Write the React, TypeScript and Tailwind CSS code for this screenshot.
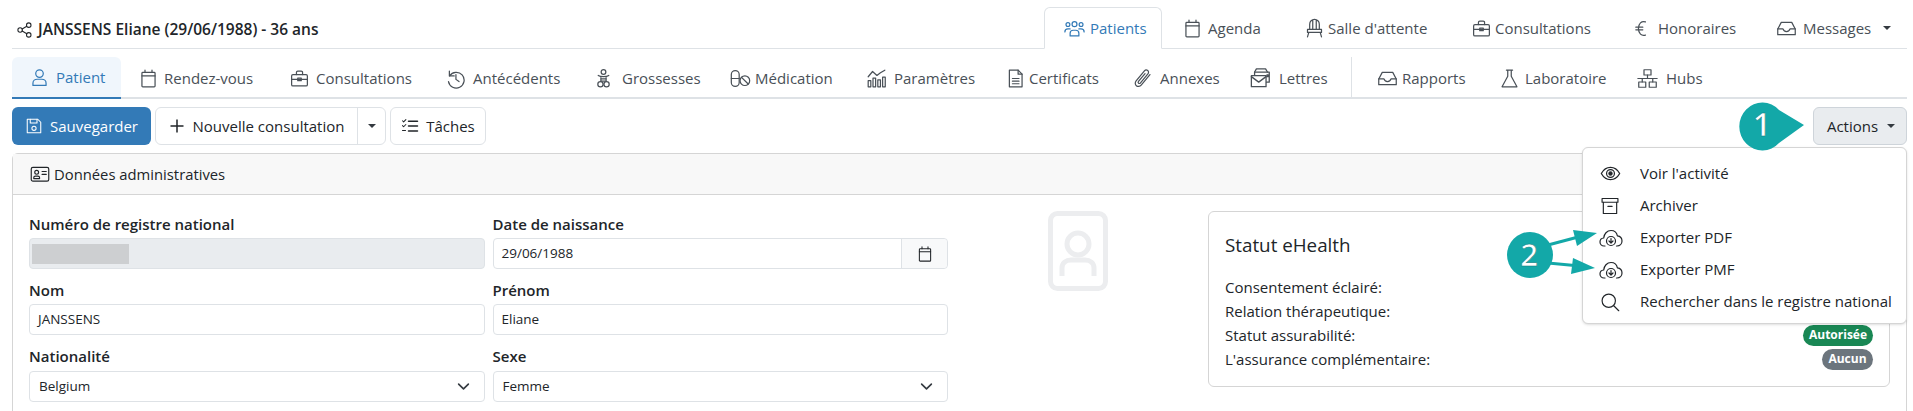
import type { ReactNode } from "react";

const Svg = ({ className = "", children }: { className?: string; children: ReactNode }) => (
	<svg
		viewBox="0 0 24 24"
		fill="none"
		stroke="currentColor"
		strokeWidth="1.4"
		strokeLinecap="round"
		strokeLinejoin="round"
		className={className}
	>
		{children}
	</svg>
);

const size = "h-[21px] w-[21px] shrink-0";

const icons: Record<string, ReactNode> = {
	share: (
		<Svg className="h-[18px] w-[18px] shrink-0">
			<circle cx="5.5" cy="12" r="3" />
			<circle cx="17" cy="5.5" r="3" />
			<circle cx="17" cy="18.5" r="3" />
			<path d="M8.2 10.6 14.4 7M8.2 13.4l6.2 3.6" />
		</Svg>
	),
	user: (
		<Svg className={size}>
			<circle cx="12" cy="7.5" r="4.3" />
			<path d="M4.5 21v-2.5c0-3 2.4-4.5 5-4.5h5c2.6 0 5 1.500 5 4.500V21z" />
		</Svg>
	),
	users: (
		<Svg className={size}>
			<circle cx="12" cy="7" r="2.800" />
			<circle cx="4.500" cy="7.500" r="2.200" />
			<circle cx="19.500" cy="7.500" r="2.200" />
			<path d="M7 20.500v-3c0-2 1.500-3.500 3.500-3.500h3c2 0 3.500 1.500 3.500 3.500v3z" />
			<path d="M1 16c0-2 1.500-3.500 3.500-3.500H7M23 16c0-2-1.500-3.500-3.500-3.500H17" />
		</Svg>
	),
	calendar: (
		<Svg className={size}>
			<rect x="4.500" y="5" width="15" height="16.500" rx="1" />
			<path d="M4.500 9h15M8 2.500V5M16 2.500V5" />
		</Svg>
	),
	briefcase: (
		<Svg className={size}>
			<rect x="3" y="7.500" width="18" height="13" rx="1.500" />
			<path d="M8.500 7.500V5a1.500 1.500 0 0 1 1.500-1.500h4A1.500 1.500 0 0 1 15.500 5v2.500M3 13h18" />
			<rect x="10" y="11.500" width="4" height="3" />
		</Svg>
	),
	history: (
		<Svg className={size}>
			<path d="M5 3.500V9h5.500" />
			<path d="M5.300 9A9 9 0 1 1 4 15.500" />
			<path d="M12.500 7.500V13l3.500 2.500" />
		</Svg>
	),
	baby: (
		<Svg className={size}>
			<circle cx="12" cy="4.500" r="2.700" />
			<path d="M6 8.500c2.500 1.800 9.500 1.800 12 0M9 10v5h6v-5M9 12.500h6" />
			<circle cx="8.500" cy="18.500" r="3" />
			<circle cx="15.500" cy="18.500" r="3" />
		</Svg>
	),
	pill: (
		<Svg className="h-[21px] w-[21px] shrink-0">
			<rect x="1.500" y="3" width="9" height="18" rx="4.500" />
			<path d="M1.500 12h9" />
			<circle cx="17" cy="14.500" r="5.500" />
			<path d="m13.200 10.700 7.600 7.600" />
		</Svg>
	),
	chart: (
		<Svg className={size}>
			<path d="M2.500 21.500v-7h3v7zM8 21.500v-10h3v10zM13.500 21.500v-8h3v8zM19 21.500v-11h3v11z" />
			<path d="m2.500 10 5-6 5 4.500 4-3 5-3" />
		</Svg>
	),
	file: (
		<Svg className={size}>
			<path d="M5 2.500h10l4.500 4.500v14.500H5z" />
			<path d="M15 2.500V7h4.500M8.500 12h7.500M8.500 15h7.500M8.500 18h7.500" />
		</Svg>
	),
	clip: (
		<Svg className={size}>
			<path d="m20.500 7.500-10 12c-1.500 1.800-4 2-5.500.7-1.600-1.300-1.700-3.700-.3-5.400l9.500-11.500c1-1.200 2.700-1.300 3.800-.4 1.100.9 1.200 2.600.2 3.800l-8.700 10.500c-.5.600-1.400.7-2 .2-.6-.5-.6-1.400-.1-2l7.500-9" />
		</Svg>
	),
	letters: (
		<Svg className="h-[22px] w-[22px] shrink-0">
			<path d="M5 9V5.500h16v11h-3" />
			<path d="M5 5.500 7 2h10l2 3.500" />
			<rect x="1.500" y="9.500" width="16" height="12" />
			<path d="m1.500 10.500 8 6 8-6" />
			<rect x="18.500" y="8.500" width="1.500" height="2" />
		</Svg>
	),
	inbox: (
		<Svg className={size}>
			<path d="M2 12.500 6 5h12l4 7.500V19H2z" />
			<path d="M2 12.500h6c.5 2 2 3 4 3s3.500-1 4-3h6" />
		</Svg>
	),
	flask: (
		<Svg className={size}>
			<path d="M8.500 2.500h7M10 2.500v7L3.500 21.500h17L14 9.500v-7" />
		</Svg>
	),
	hubs: (
		<Svg className={size}>
			<rect x="8" y="2" width="8" height="6" />
			<rect x="2" y="16" width="8" height="6" />
			<rect x="14" y="16" width="8" height="6" />
			<path d="M12 8v4M1 12h22M6 12v4M18 12v4" />
		</Svg>
	),
	chair: (
		<Svg className={size}>
			<path d="M6.500 13V7a5.500 5.500 0 0 1 11 0v6M10 13V3M14 13V3" />
			<path d="M4 13h16v3.500H4zM5.500 16.500 4 21.500M18.500 16.500l1.500 5" />
		</Svg>
	),
	euro: (
		<Svg className={size}>
			<path d="M16.500 4.500C12 3 8.500 6.500 8.500 12s3.500 9 8 7.500M5.500 10.500h8M5.500 13.500h8" />
		</Svg>
	),
	save: (
		<Svg className="h-[18px] w-[18px] shrink-0">
			<path d="M3 3h14l4 4v14H3z" />
			<path d="M7 3v5h9V3" />
			<circle cx="12" cy="15" r="2.800" />
		</Svg>
	),
	tasks: (
		<Svg className="h-[18px] w-[18px] shrink-0">
			<path d="M10 5.500h12M10 12h12M10 18.500h12" strokeWidth="2" />
			<path d="m2 5 1.500 1.500L6.500 3.500M2 11.500 3.500 13l3-3M2 18h4" />
		</Svg>
	),
	idcard: (
		<Svg className="h-[20px] w-[20px] shrink-0">
			<rect x="1.500" y="4" width="21" height="16.500" rx="2" />
			<circle cx="8" cy="10" r="2.300" />
			<path d="M4.500 17.500v-1c0-1.300 1-2 2-2h3c1 0 2 .7 2 2v1zM14.500 9h5M14.500 12.500h5" />
		</Svg>
	),
	eye: (
		<Svg className="h-[21px] w-[21px] shrink-0">
			<path d="M1.500 12C4 7.500 7.700 5 12 5s8 2.500 10.500 7c-2.500 4.500-6.200 7-10.500 7s-8-2.500-10.500-7z" />
			<circle cx="12" cy="12" r="4.500" />
			<circle cx="12" cy="12" r="1.800" fill="currentColor" />
		</Svg>
	),
	archive: (
		<Svg className="h-[20px] w-[20px] shrink-0">
			<rect x="2.500" y="3" width="19" height="4.500" />
			<path d="M4 7.500V21h16V7.500M9.500 12.500h5" />
		</Svg>
	),
	cloud: (
		<svg
			viewBox="0 0 24 24"
			fill="none"
			stroke="currentColor"
			strokeWidth="1.200"
			strokeLinecap="round"
			strokeLinejoin="round"
			className="h-[24px] w-[24px] shrink-0 -ml-px"
		>
			<path d="M6 20H5C2.800 20 1 18.200 1 16s1.600-3.800 3.700-4C5 8 8 4.500 12 4.500c3.200 0 5.800 2.300 6.400 5.300 2.600.3 4.600 2.500 4.600 5.200 0 2.800-2.200 5-5 5h-.5" />
			<circle cx="12" cy="15" r="4.500" />
			<path d="M12 12.500v4.500M10 15l2 2 2-2" />
		</svg>
	),
	search: (
		<Svg className="h-[20px] w-[20px] shrink-0">
			<circle cx="10.500" cy="10.500" r="8" />
			<path d="m16.500 16.500 6 6" />
		</Svg>
	),
};

const mainTabs = [
	{ label: "Patients", icon: "users", width: "w-[118px]", pad: "pl-[19px]", box: "w-[26px]", active: true },
	{ label: "Agenda", icon: "calendar", width: "w-[124px]", pad: "pl-[20px]", box: "w-[26px]" },
	{ label: "Salle d'attente", icon: "chair", width: "w-[167px]", pad: "pl-[18px]", box: "w-[24px]" },
	{ label: "Consultations", icon: "briefcase", width: "w-[164px]", pad: "pl-[18px]", box: "w-[24px]" },
	{ label: "Honoraires", icon: "euro", width: "w-[140px]", pad: "pl-[14px]", box: "w-[27px]" },
	{ label: "Messages", icon: "inbox", width: "w-[150px]", pad: "pl-[19px]", box: "w-[27px]", caret: true },
];

const subTabs = [
	{ label: "Patient", icon: "user", width: "w-[109px]", pad: "pl-[17px]", box: "w-[27px]", active: true },
	{ label: "Rendez-vous", icon: "calendar", width: "w-[152px]", pad: "pl-[17px]", box: "w-[26px]" },
	{ label: "Consultations", icon: "briefcase", width: "w-[157px]", pad: "pl-[16px]", box: "w-[27px]" },
	{ label: "Antécédents", icon: "history", width: "w-[150px]", pad: "pl-[15px]", box: "w-[28px]" },
	{ label: "Grossesses", icon: "baby", width: "w-[134px]", pad: "pl-[13px]", box: "w-[29px]" },
	{ label: "Médication", icon: "pill", width: "w-[136px]", pad: "pl-[16px]", box: "w-[25px]" },
	{ label: "Paramètres", icon: "chart", width: "w-[140px]", pad: "pl-[16px]", box: "w-[28px]" },
	{ label: "Certificats", icon: "file", width: "w-[126px]", pad: "pl-[15px]", box: "w-[24px]" },
	{ label: "Annexes", icon: "clip", width: "w-[117px]", pad: "pl-[16px]", box: "w-[28px]" },
	{ label: "Lettres", icon: "letters", width: "w-[118px]", pad: "pl-[17px]", box: "w-[29px]" },
];

const reportTabs = [
	{ label: "Rapports", icon: "inbox", width: "w-[131px]", pad: "pl-[25px]", box: "w-[25px]" },
	{ label: "Laboratoire", icon: "flask", width: "w-[137px]", pad: "pl-[16px]", box: "w-[26px]" },
	{ label: "Hubs", icon: "hubs", width: "w-[100px]", pad: "pl-[17px]", box: "w-[29px]" },
];

const menu = [
	{ label: "Voir l'activité", icon: "eye" },
	{ label: "Archiver", icon: "archive" },
	{ label: "Exporter PDF", icon: "cloud" },
	{ label: "Exporter PMF", icon: "cloud" },
	{ label: "Rechercher dans le registre national", icon: "search" },
];

const Caret = () => (
	<span className="inline-block h-0 w-0 border-x-[4px] border-t-[4px] border-x-transparent border-t-[#343a40]" />
);

const Chevron = () => (
	<svg viewBox="0 0 16 16" className="h-[13px] w-[13px] text-[#343a40]" fill="none" stroke="currentColor" strokeWidth="2" strokeLinecap="round" strokeLinejoin="round">
		<path d="m2 5 6 6 6-6" />
	</svg>
);

type Tab = { label: string; icon: string; width: string; pad: string; box: string; active?: boolean; caret?: boolean };

const SubTab = ({ tab }: { tab: Tab }) => (
	<div
		className={`flex h-[42px] shrink-0 items-center ${tab.width} ${tab.pad} ${
			tab.active
				? "-mb-[2px] rounded-t-md border-b-[2px] border-[#337ab7] bg-[#f0f6fc] text-[#337ab7]"
				: "text-[#495057]"
		}`}
	>
		<span className={`flex shrink-0 items-center ${tab.box}`}>{icons[tab.icon]}</span>
		<span>{tab.label}</span>
	</div>
);

const Label = ({ children }: { children: ReactNode }) => (
	<div className="h-[24px] text-[15px] leading-[22px] font-semibold text-[#212529]">{children}</div>
);

const inputClass = "flex h-[31px] items-center rounded border border-[#dee2e6] bg-white px-2 text-[13.5px] text-[#212529]";

const Field = ({ label, value }: { label: string; value: string }) => (
	<div>
		<Label>{label}</Label>
		<div className={`mt-px ${inputClass}`}>{value}</div>
	</div>
);

const SelectField = ({ label, value }: { label: string; value: string }) => (
	<div>
		<Label>{label}</Label>
		<div className={`mt-[2px] justify-between ${inputClass}`}>
			<span className="pl-px">{value}</span>
			<span className="flex pr-[6px]">
				<Chevron />
			</span>
		</div>
	</div>
);

const Callouts = () => (
	<svg className="pointer-events-none absolute top-0 left-0 z-20 h-[411px] w-[1913px]" viewBox="0 0 1913 411">
		<path d="M1779 110 1804 125 1779 143A23 24 0 1 1 1779 110Z" fill="#13a8a8" />
		<text x="1762" y="136" textAnchor="middle" fontSize="32" fontWeight="600" fill="#fff" stroke="#0c7d7d" strokeWidth="0.5" fontFamily="'Open Sans', sans-serif">
			1
		</text>
		<path d="M1548 245 1582 236" stroke="#13a8a8" strokeWidth="3" />
		<path d="M1597 233 1573 230 1577 246Z" fill="#13a8a8" />
		<path d="M1548 263 1580 266" stroke="#13a8a8" strokeWidth="3" />
		<path d="M1595 268 1573 258 1571 274Z" fill="#13a8a8" />
		<ellipse cx="1530" cy="255" rx="23" ry="23" fill="#13a8a8" />
		<text x="1529" y="266" textAnchor="middle" fontSize="31" fontWeight="600" fill="#fff" stroke="#0c7d7d" strokeWidth="0.5" fontFamily="'Open Sans', sans-serif">
			2
		</text>
	</svg>
);

export default function App() {
	return (
		<div className="relative h-[411px] w-[1913px] overflow-hidden bg-white pr-[6px] pl-3 font-['Open_Sans',sans-serif] text-[15px] text-[#212529]">
			{/* patient title + main navigation */}
			<div className="flex h-[49px] items-end justify-between border-b border-[#dee2e6]">
				<div className="flex h-[48px] items-center gap-[4px] pt-[12px] pl-1 text-[15.5px] font-semibold">
					{icons.share}
					<span>JANSSENS Eliane (29/06/1988) - 36 ans</span>
				</div>
				<div className="flex h-[42px] -mb-px">
					{mainTabs.map((tab: Tab) => (
						<div
							key={tab.label}
							className={`flex shrink-0 items-center ${tab.width} ${tab.pad} ${
								tab.active
									? "rounded-t-md border border-b-white border-[#dee2e6] text-[#337ab7]"
									: "text-[#495057]"
							}`}
						>
							<span className={`flex shrink-0 items-center ${tab.box}`}>{icons[tab.icon]}</span>
							<span>{tab.label}</span>
							{tab.caret && (
								<span className="ml-[12px] flex">
									<Caret />
								</span>
							)}
						</div>
					))}
				</div>
			</div>

			{/* patient sections */}
			<div className="mt-2 flex h-[42px] border-b-[2px] border-[#dee2e6]">
				{subTabs.map((tab) => (
					<SubTab key={tab.label} tab={tab} />
				))}
				<div className="h-full w-px shrink-0 bg-[#dee2e6]" />
				{reportTabs.map((tab) => (
					<SubTab key={tab.label} tab={tab} />
				))}
			</div>

			{/* toolbar */}
			<div className="mt-2 flex h-[38px] items-stretch justify-between">
				<div className="flex gap-1">
					<button className="flex w-[139px] items-center justify-center gap-[7px] rounded-md bg-[#337ab7] text-white">
						{icons.save}
						Sauvegarder
					</button>
					<div className="flex w-[231px] rounded-md border border-[#dee2e6] text-[#212529]">
						<div className="flex flex-1 items-center justify-center gap-[8px] border-r border-[#dee2e6]">
							<svg viewBox="0 0 16 16" className="h-[16px] w-[16px]" fill="none" stroke="currentColor" strokeWidth="1.500">
								<path d="M8 1.500v13M1.500 8h13" />
							</svg>
							Nouvelle consultation
						</div>
						<div className="flex w-[27px] items-center justify-center">
							<Caret />
						</div>
					</div>
					<button className="flex w-[96px] items-center justify-center gap-[7px] rounded-md border border-[#dee2e6]">
						{icons.tasks}
						Tâches
					</button>
				</div>
				<div className="relative">
					<button className="flex h-full w-[94px] items-center justify-center gap-[9px] rounded-md border border-[#ced4da] bg-[#e9ecef] pl-[2px]">
						Actions
						<Caret />
					</button>
					<div className="absolute top-[40px] right-0 z-10 flex h-[177px] w-[325px] flex-col justify-center rounded-md border border-[#d5d5d5] bg-white pt-[4px] shadow-sm">
						{menu.map((item) => (
							<div key={item.label} className="flex h-[32px] items-center pl-[17px] text-[15px] text-[#212529]">
								<span className="flex w-[40px] shrink-0 items-center">{icons[item.icon]}</span>
								<span className="whitespace-nowrap">{item.label}</span>
							</div>
						))}
					</div>
				</div>
			</div>

			{/* administrative data */}
			<div className="mt-2 h-[300px] rounded-t-md border border-[#d5d5d5]">
				<div className="flex h-[41px] items-center gap-[4px] border-b border-[#d5d5d5] bg-[#f8f8f8] pl-[17px] text-[14.8px] text-[#212529]">
					{icons.idcard}
					Données administratives
				</div>
				<div className="flex pt-[18px] pl-4">
					<div className="grid w-[919px] grid-cols-2 gap-x-2 gap-y-[10px]">
						<div>
							<Label>Numéro de registre national</Label>
							<div className="mt-px flex h-[31px] items-center rounded border border-[#dee2e6] bg-[#e9ecef] pl-[2px]">
								<div className="h-[20px] w-[97px] bg-[#cdcfd1]" />
							</div>
						</div>
						<div>
							<Label>Date de naissance</Label>
							<div className={`mt-px !px-0 ${inputClass}`}>
								<span className="flex-1 pl-2">29/06/1988</span>
								<span className="flex h-full w-[46px] items-center justify-center rounded-r border-l border-[#dee2e6] bg-[#f8f9fa]">
									<Svg className="h-[18px] w-[18px] text-[#212529]">
										<rect x="4.500" y="5" width="15" height="16.500" rx="1" />
										<path d="M4.500 9h15M8 2.500V5M16 2.500V5" />
									</Svg>
								</span>
							</div>
						</div>
						<Field label="Nom" value="JANSSENS" />
						<Field label="Prénom" value="Eliane" />
						<SelectField label="Nationalité" value="Belgium" />
						<SelectField label="Sexe" value="Femme" />
					</div>

					<div className="-mt-[2px] ml-[100px] h-[80px] w-[60px] shrink-0">
						<svg viewBox="0 0 60 80" className="h-[80px] w-[60px]" fill="none" stroke="#ecedef" strokeWidth="5">
							<rect x="2.500" y="2.500" width="55" height="75" rx="7" />
							<ellipse cx="30" cy="33" rx="11" ry="11" />
							<path d="M14 65V57c0-5 4-8 9-8h14c5 0 9 3 9 8v8" />
						</svg>
					</div>

					<div className="-mt-[2px] ml-[100px] h-[176px] w-[682px] shrink-0 rounded-md border border-[#d5d5d5] px-4 pt-[20px]">
						<div className="text-[18.8px] leading-[27px]">Statut eHealth</div>
						<div className="mt-[16px] flex h-[24px] items-center justify-between">Consentement éclairé:</div>
						<div className="flex h-[24px] items-center justify-between">Relation thérapeutique:</div>
						<div className="flex h-[24px] items-center justify-between">
							Statut assurabilité:
							<span className="flex h-[21px] w-[70px] items-center justify-center rounded-full bg-[#198754] text-[12px] font-bold text-white">
								Autorisée
							</span>
						</div>
						<div className="flex h-[24px] items-center justify-between">
							L'assurance complémentaire:
							<span className="flex h-[21px] w-[51px] items-center justify-center rounded-full bg-[#6c757d] text-[12px] font-bold text-white">
								Aucun
							</span>
						</div>
					</div>
				</div>
			</div>

			<Callouts />
		</div>
	);
}
